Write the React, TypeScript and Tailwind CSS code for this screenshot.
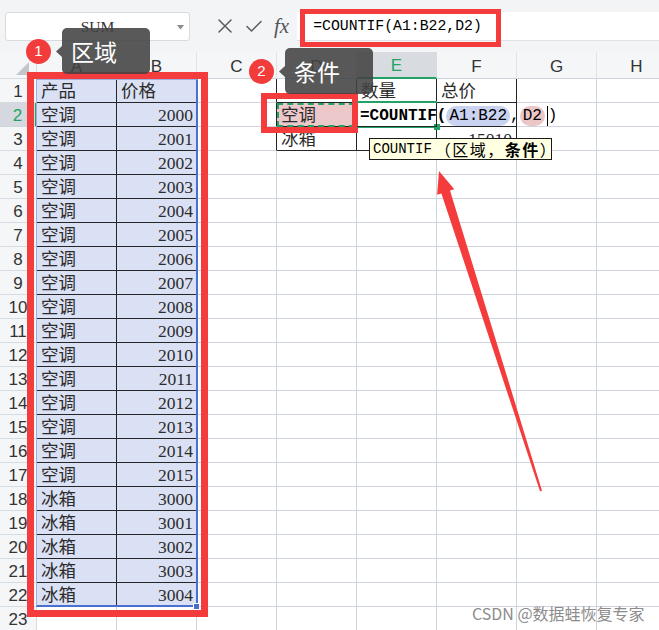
import React from "react";

const COLS = ["A", "B", "C", "D", "E", "F", "G", "H"];
const ROWS = Array.from({ length: 23 }, (_, i) => i + 1);

const cellFont = "font-['Liberation_Serif','Noto_Sans_CJK_SC',serif] text-[17.5px] leading-none text-[#2b2b2b] pt-[3px]";
const grid = "border-r border-b border-[#cfd3de]";
const inTable = "border-r border-b border-[#262626]";
const dataFill = "border-r border-b border-[#262626] bg-[#dbe1f4]";

function dataRow(r: number): [string, string] | null {
  if (r === 1) return ["产品", "价格"];
  if (r >= 2 && r <= 17) return ["空调", String(2000 + r - 2)];
  if (r >= 18 && r <= 22) return ["冰箱", String(3000 + r - 18)];
  return null;
}

function Cell({ r, c }: { r: number; c: number }) {
  const data = dataRow(r);

  if (data && c === 0) {
    return (
      <div className={`${dataFill} ${cellFont} flex items-center pl-[4px]`}>{data[0]}</div>
    );
  }
  if (data && c === 1) {
    return (
      <div className={`${dataFill} ${cellFont} flex items-center ${r === 1 ? "pl-[4px]" : "justify-end pr-[3px]"}`}>
        {data[1]}
      </div>
    );
  }
  if (c === 2 && r <= 3) {
    return <div className="border-r border-b border-r-[#262626] border-b-[#cfd3de]" />;
  }
  if (r <= 3 && c >= 3 && c <= 5) {
    if (r === 2 && c === 3) {
      return <div className={`${inTable} ${cellFont} bg-[#ecc8ca] flex items-center pl-[4px]`}>空调</div>;
    }
    if (r === 2 && c === 4) {
      return (
        <div className={`${inTable} relative z-10`}>
          <div className="absolute left-[3px] top-[3px] flex items-center whitespace-nowrap font-['Liberation_Mono',monospace] text-[16px] leading-none text-black">
            <span className="font-bold">=COUNTIF(</span>
            <span className="rounded-full bg-[#c9d2f0] px-[3px] py-[2px]">A1:B22</span>
            <span>,</span>
            <span className="rounded-full bg-[#ebc6c6] px-[3px] py-[2px]">D2</span>
            <span className="ml-[2px] h-[20px] w-px bg-black" />
            <span>)</span>
          </div>
        </div>
      );
    }
    const text = r === 1 && c === 4 ? "数量" : r === 1 && c === 5 ? "总价" : r === 3 && c === 3 ? "冰箱" : "";
    if (r === 3 && c === 5) {
      return <div className={`${inTable} ${cellFont} flex items-center justify-end pr-[4px]`}>15010</div>;
    }
    return <div className={`${inTable} ${cellFont} flex items-center pl-[4px]`}>{text}</div>;
  }
  return <div className={grid} />;
}

function TopBar() {
  return (
    <div className="flex h-[52px] items-center bg-[#f3f4f6] pl-[5px]">
      <div className="relative flex h-[29px] w-[185px] items-center justify-center rounded-[3px] border border-[#d9dadd] bg-white pt-[2px] font-['Liberation_Serif',serif] text-[15.5px] text-[#333]">
        SUM
        <svg className="absolute right-[5px] top-[12px]" width="7" height="5" viewBox="0 0 7 5">
          <path d="M0 0 H7 L3.5 4.5 Z" fill="#8a8a8a" />
        </svg>
      </div>
      <svg className="ml-[28px]" width="14" height="14" viewBox="0 0 14 14">
        <path d="M1 1 L13 13 M13 1 L1 13" stroke="#5c5c5c" strokeWidth="1.5" strokeLinecap="round" />
      </svg>
      <svg className="ml-[14px]" width="16" height="13" viewBox="0 0 16 13">
        <path d="M1 6.5 L5.5 11 L15 1.5" stroke="#5c5c5c" strokeWidth="1.5" fill="none" strokeLinecap="round" strokeLinejoin="round" />
      </svg>
      <span className="ml-[12px] font-['Liberation_Serif',serif] text-[21px] italic leading-none text-[#555]">fx</span>
      <div className="ml-[8px] flex h-[29px] flex-1 items-center border-b border-[#e0e1e4] bg-white pl-[16px] pt-[2px] font-['Liberation_Mono',monospace] text-[14.8px] text-black">
        =COUNTIF(A1:B22,D2)
      </div>
    </div>
  );
}

function Sheet() {
  return (
    <div className="grid grid-cols-[37px_repeat(8,80px)] grid-rows-[27px_repeat(23,24px)] font-['Liberation_Sans',sans-serif]">
      <div className="relative border-r border-b border-[#d7dae1] bg-[#f5f6f8]">
        <svg className="absolute bottom-[3px] right-[7px]" width="13" height="13" viewBox="0 0 13 13">
          <path d="M13 0 V13 H0 Z" fill="#c3c5ca" />
        </svg>
      </div>
      {COLS.map((col) => (
        <div
          key={col}
          className={
            col === "E"
              ? "flex items-center justify-center border-r border-b-2 border-r-[#d7dae1] border-b-[#21a366] bg-[#d8dbe0] pt-[3px] text-[17px] text-[#21a366]"
              : "flex items-center justify-center border-r border-b border-r-[#e1e3e8] border-b-[#cfd3de] bg-[#f5f6f8] pt-[3px] text-[17px] text-[#333]"
          }
        >
          {col}
        </div>
      ))}
      {ROWS.map((r) => (
        <React.Fragment key={r}>
          <div
            className={
              r === 2
                ? "flex items-center justify-center border-r-2 border-b border-r-[#21a366] border-b-[#cfd3de] bg-[#d5d8de] pt-[2px] text-[17px] text-[#21a366]"
                : "flex items-center justify-center border-r border-b border-[#d7dae1] bg-[#f5f6f8] pt-[2px] text-[17px] text-[#333]"
            }
          >
            {r}
          </div>
          {COLS.map((_, c) => (
            <Cell key={c} r={r} c={c} />
          ))}
        </React.Fragment>
      ))}
    </div>
  );
}

function Label({ n, text, className }: { n: string; text: string; className: string }) {
  return (
    <div className={`absolute flex items-center ${className}`}>
      <div className="flex h-[25px] w-[25px] items-center justify-center rounded-full bg-[#f23b3b] font-['Liberation_Sans',sans-serif] text-[15px] text-white">
        {n}
      </div>
      <svg className="ml-[5px]" width="6" height="11" viewBox="0 0 6 11">
        <path d="M6 0 V11 L0 5.5 Z" fill="rgba(66,66,66,0.88)" />
      </svg>
      <div className="flex h-[46px] w-[88px] items-center rounded-[5px] bg-[rgba(66,66,66,0.88)] pl-[9px] font-['Noto_Sans_CJK_SC',sans-serif] text-[23px] text-white">
        {text}
      </div>
    </div>
  );
}

export default function App() {
  return (
    <div className="relative h-[630px] w-[659px] overflow-hidden bg-white">
      <TopBar />
      <Sheet />

      {/* formula bar highlight */}
      <div className="absolute left-[300px] top-[9px] h-[38px] w-[201px] border-[5px] border-[#f53c3c]" />

      {/* range selection A1:B22 */}
      <div className="absolute left-[36px] top-[79px] h-[528px] w-[162px] border-r-2 border-b-2 border-l border-t border-r-[#4a6fcf] border-b-[#4a6fcf] border-l-[#9fb0de] border-t-[#9fb0de]" />
      <div className="absolute left-[193px] top-[603px] h-[7px] w-[7px] border border-white bg-[#4a6fcf]" />
      <div className="absolute left-[27px] top-[72px] h-[545px] w-[181px] border-[7px] border-[#f53c3c]" />

      {/* D2 copy marquee and highlight */}
      <div className="absolute left-[277px] top-[103px] h-[24px] w-[78px] border-2 border-dashed border-[#21a366]" />
      <div className="absolute left-[261px] top-[93px] h-[40px] w-[97px] border-[6px] border-[#f53c3c]" />

      {/* E2 active edit frame */}
      <div className="absolute left-[357px] top-[101px] h-[27px] w-[80px] border-y-2 border-[#21a366]" />
      <div className="absolute left-[434px] top-[124px] h-[6px] w-[6px] bg-[#21a366]" />

      {/* function hint */}
      <div className="absolute left-[369px] top-[138px] flex h-[22px] w-[183px] items-center border border-[#1a1a1a] bg-[#ffffe1] pl-[3px] whitespace-nowrap text-[14px] leading-none text-black">
        <span className="font-['Liberation_Mono',monospace]">COUNTIF</span>
        <span className="ml-[3px] font-['Noto_Sans_CJK_SC',sans-serif] text-[16px] tracking-[1.5px]">（区域，</span>
        <span className="font-['Noto_Sans_CJK_SC',sans-serif] text-[16px] font-bold tracking-[1.5px]">条件</span>
        <span className="font-['Noto_Sans_CJK_SC',sans-serif] text-[16px]">）</span>
      </div>

      <Label n="1" text="区域" className="left-[26px] top-[28px]" />
      <Label n="2" text="条件" className="left-[249px] top-[48px]" />

      {/* pointer arrow */}
      <svg className="pointer-events-none absolute left-0 top-0" width="659" height="630" viewBox="0 0 659 630">
        <polygon
          points="439,171 454.3,189.3 450,190.6 542,490.7 540,491.3 441.4,193.4 437.1,194.7"
          fill="#f53c3c"
        />
      </svg>

      <div className="absolute left-[472px] top-[601px] font-['Noto_Sans_CJK_SC',sans-serif] text-[16px] text-[#8c8c8c]">
        CSDN @数据蛙恢复专家
      </div>
    </div>
  );
}
